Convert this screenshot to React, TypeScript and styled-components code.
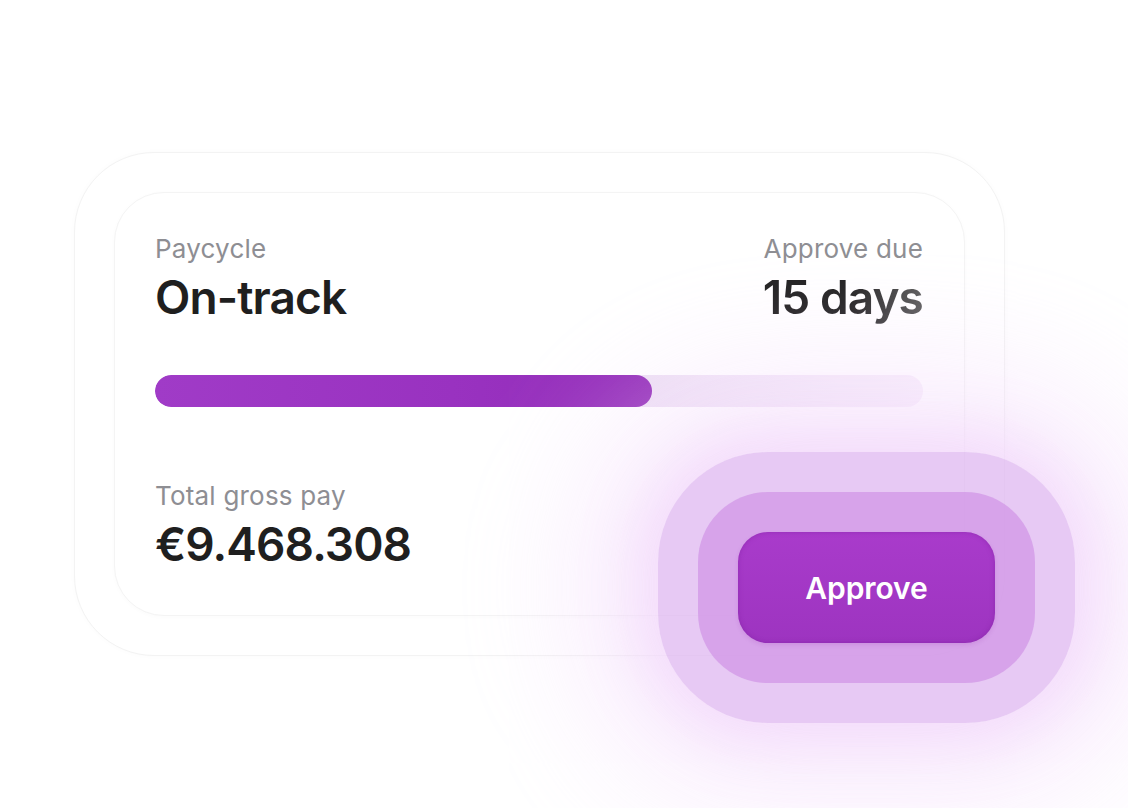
import React, { FC } from 'react'
import styled, { createGlobalStyle } from 'styled-components'

const GlobalStyle = createGlobalStyle`
  body {
    margin: 0;
    background: #ffffff;
    font-family: Inter, "Noto Sans", sans-serif;
  }
`

const progress = 0.647

const App: FC = () => {
  return (
    <>
      <GlobalStyle />
      <Page>
        <OuterCard>
          <InnerCard>
            <TopRow>
              <Stat>
                <Label>Paycycle</Label>
                <Value>On-track</Value>
              </Stat>
              <Stat $align="right">
                <Label>Approve due</Label>
                <Value $fade>15 days</Value>
              </Stat>
            </TopRow>
            <Track>
              <Fill style={{ width: `${progress * 100}%` }} />
            </Track>
            <Stat>
              <Label>Total gross pay</Label>
              <Value>€9.468.308</Value>
            </Stat>
          </InnerCard>
          <Glow>
            <Ring>
              <Button>Approve</Button>
            </Ring>
          </Glow>
        </OuterCard>
      </Page>
    </>
  )
}

export default App

const Page = styled.div`
  width: 1128px;
  height: 808px;
  padding: 152px 0 0 74px;
  box-sizing: border-box;
  overflow: hidden;
`

const OuterCard = styled.div`
  position: relative;
  width: 931px;
  height: 504px;
  box-sizing: border-box;
  padding: 39px;
  background: #ffffff;
  border: 1px solid #f3f3f3;
  border-radius: 80px;
  box-shadow: 0 0 6px rgba(0, 0, 0, 0.02);
`

const InnerCard = styled.div`
  height: 100%;
  box-sizing: border-box;
  padding: 41px 41px 43px 40px;
  display: flex;
  flex-direction: column;
  background: #ffffff;
  border: 1px solid #f4f4f4;
  border-radius: 50px;
  box-shadow: 0 1px 5px rgba(0, 0, 0, 0.02);
`

const TopRow = styled.div`
  display: flex;
  justify-content: space-between;
  margin-bottom: 50px;
`

const Stat = styled.div<{ $align?: 'left' | 'right' }>`
  display: flex;
  flex-direction: column;
  gap: 6px;
  align-items: ${(p) => (p.$align === 'right' ? 'flex-end' : 'flex-start')};
`

const Label = styled.div`
  font-size: 26px;
  line-height: 30px;
  color: #8e8e93;
  letter-spacing: 0.2px;
`

const Value = styled.div<{ $fade?: boolean }>`
  font-size: 46px;
  line-height: 55px;
  font-weight: 600;
  letter-spacing: -0.9px;
  color: #1f1f1f;
  ${(p) =>
    p.$fade &&
    `
    background: linear-gradient(90deg, #1f1f1f 55%, #5a5a5a 100%);
    -webkit-background-clip: text;
    background-clip: text;
    color: transparent;
  `}
`

const Track = styled.div`
  height: 32px;
  border-radius: 16px;
  margin-bottom: 74px;
  background: linear-gradient(90deg, #ebdcf2 0%, #eddff4 60%, #f8f0fb 100%);
  overflow: hidden;
`

const Fill = styled.div`
  height: 100%;
  border-radius: 16px;
  background: linear-gradient(90deg, #a03bc7 0%, #9932c0 60%, #922bb8 100%);
`

const Glow = styled.div`
  position: absolute;
  left: 583px;
  top: 299px;
  width: 417px;
  height: 271px;
  border-radius: 110px;
  box-shadow: 0 0 140px 70px rgba(243, 218, 251, 0.6),
    0 0 50px 20px rgba(238, 205, 249, 0.6);
  background: rgba(222, 180, 240, 0.72);
  padding: 40px;
  box-sizing: border-box;
  display: flex;
`

const Ring = styled.div`
  flex: 1;
  border-radius: 70px;
  background: rgba(205, 140, 228, 0.62);
  padding: 40px;
  display: flex;
`

const Button = styled.button`
  flex: 1;
  border: none;
  border-radius: 30px;
  background: linear-gradient(180deg, #a93bcb 0%, #9d34c0 100%);
  box-shadow: inset 0 0 5px rgba(110, 20, 140, 0.35), 0 2px 4px rgba(140, 40, 170, 0.15);
  color: #ffffff;
  font-family: Inter, "Noto Sans", sans-serif;
  font-size: 30px;
  font-weight: 600;
  letter-spacing: -0.1px;
  cursor: pointer;
`
